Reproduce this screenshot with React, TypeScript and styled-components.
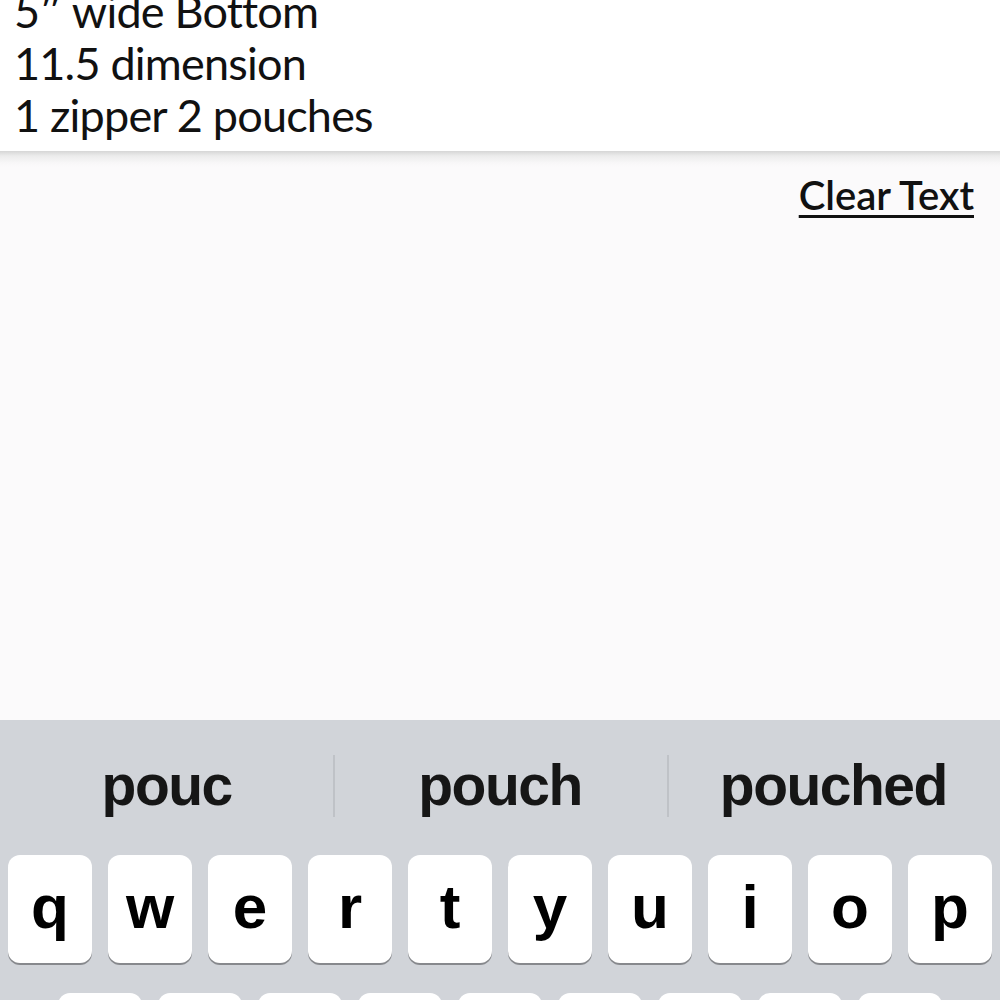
import { createGlobalStyle } from 'styled-components';
import styled from 'styled-components';

const noteLines = ['5″ wide Bottom', '11.5 dimension', '1 zipper 2 pouches'];
const suggestions = ['pouc', 'pouch', 'pouched'];
const keyRows = [
  ['q', 'w', 'e', 'r', 't', 'y', 'u', 'i', 'o', 'p'],
  ['a', 's', 'd', 'f', 'g', 'h', 'j', 'k', 'l'],
];

export default function App() {
  return (
    <>
      <GlobalStyle />
      <Screen>
        <Notes>
          <NoteText>
            {noteLines.map((line) => (
              <div key={line}>{line}</div>
            ))}
          </NoteText>
        </Notes>
        <Canvas>
          <ClearLink type="button">Clear Text</ClearLink>
        </Canvas>
        <Keyboard>
          <SuggestionBar>
            {suggestions.map((word, i) => (
              <Suggestion key={word} $divider={i > 0}>
                {word}
              </Suggestion>
            ))}
          </SuggestionBar>
          {keyRows.map((row, i) => (
            <KeyRow key={i} $indent={i === 0 ? 8 : 58}>
              {row.map((k) => (
                <Key key={k}>{k}</Key>
              ))}
            </KeyRow>
          ))}
        </Keyboard>
      </Screen>
    </>
  );
}

const GlobalStyle = createGlobalStyle`
  html, body {
    margin: 0;
    padding: 0;
    background: #fff;
    overflow: hidden;
  }
`;

const Screen = styled.div`
  width: 1000px;
  height: 1000px;
  display: flex;
  flex-direction: column;
  overflow: hidden;
`;

const Notes = styled.div`
  height: 151px;
  flex-shrink: 0;
  background: #fff;
  padding-left: 14px;
  overflow: hidden;
  box-sizing: border-box;
`;

const NoteText = styled.div`
  margin-top: -15px;
  font-family: Lato, 'Open Sans', sans-serif;
  font-size: 45px;
  line-height: 52px;
  letter-spacing: -0.8px;
  color: #111;
  white-space: nowrap;
`;

const Canvas = styled.div`
  flex: 1;
  background: linear-gradient(#d6d6d6 0px, #ececec 5px, #f8f7f8 12px, #fbfafb 16px);
  display: flex;
  justify-content: flex-end;
  align-items: flex-start;
  padding: 20px 26px 0 0;
`;

const ClearLink = styled.button`
  border: none;
  background: none;
  padding: 0;
  font-family: Lato, 'Open Sans', sans-serif;
  font-size: 40px;
  font-weight: 600;
  color: #111;
  text-decoration: underline;
  text-decoration-thickness: 3px;
  text-underline-offset: 5px;
  cursor: pointer;
`;

const Keyboard = styled.div`
  height: 280px;
  flex-shrink: 0;
  background: #d1d4d9;
  display: flex;
  flex-direction: column;
  overflow: hidden;
`;

const SuggestionBar = styled.div`
  height: 135px;
  display: grid;
  grid-template-columns: repeat(3, 1fr);
  flex-shrink: 0;
`;

const Suggestion = styled.div<{ $divider: boolean }>`
  position: relative;
  display: flex;
  align-items: center;
  justify-content: center;
  padding-bottom: 5px;
  font-family: 'Liberation Sans', Arial, sans-serif;
  font-weight: 700;
  font-size: 57px;
  letter-spacing: -1.5px;
  color: #161616;

  &::before {
    content: '';
    display: ${(p) => (p.$divider ? 'block' : 'none')};
    position: absolute;
    left: 0;
    top: 35px;
    height: 62px;
    width: 2px;
    background: #bfc2c7;
  }
`;

const KeyRow = styled.div<{ $indent: number }>`
  display: flex;
  gap: 16px;
  padding-left: ${(p) => p.$indent}px;
  margin-bottom: 30px;
  flex-shrink: 0;
`;

const Key = styled.div`
  width: 84px;
  height: 108px;
  border-radius: 12px;
  background: #fff;
  box-shadow: 0 2px 0 #87898d;
  display: flex;
  align-items: center;
  justify-content: center;
  padding-bottom: 6px;
  box-sizing: border-box;
  font-family: 'Liberation Sans', Arial, sans-serif;
  font-weight: 700;
  font-size: 62px;
  color: #000;
  flex-shrink: 0;
`;
